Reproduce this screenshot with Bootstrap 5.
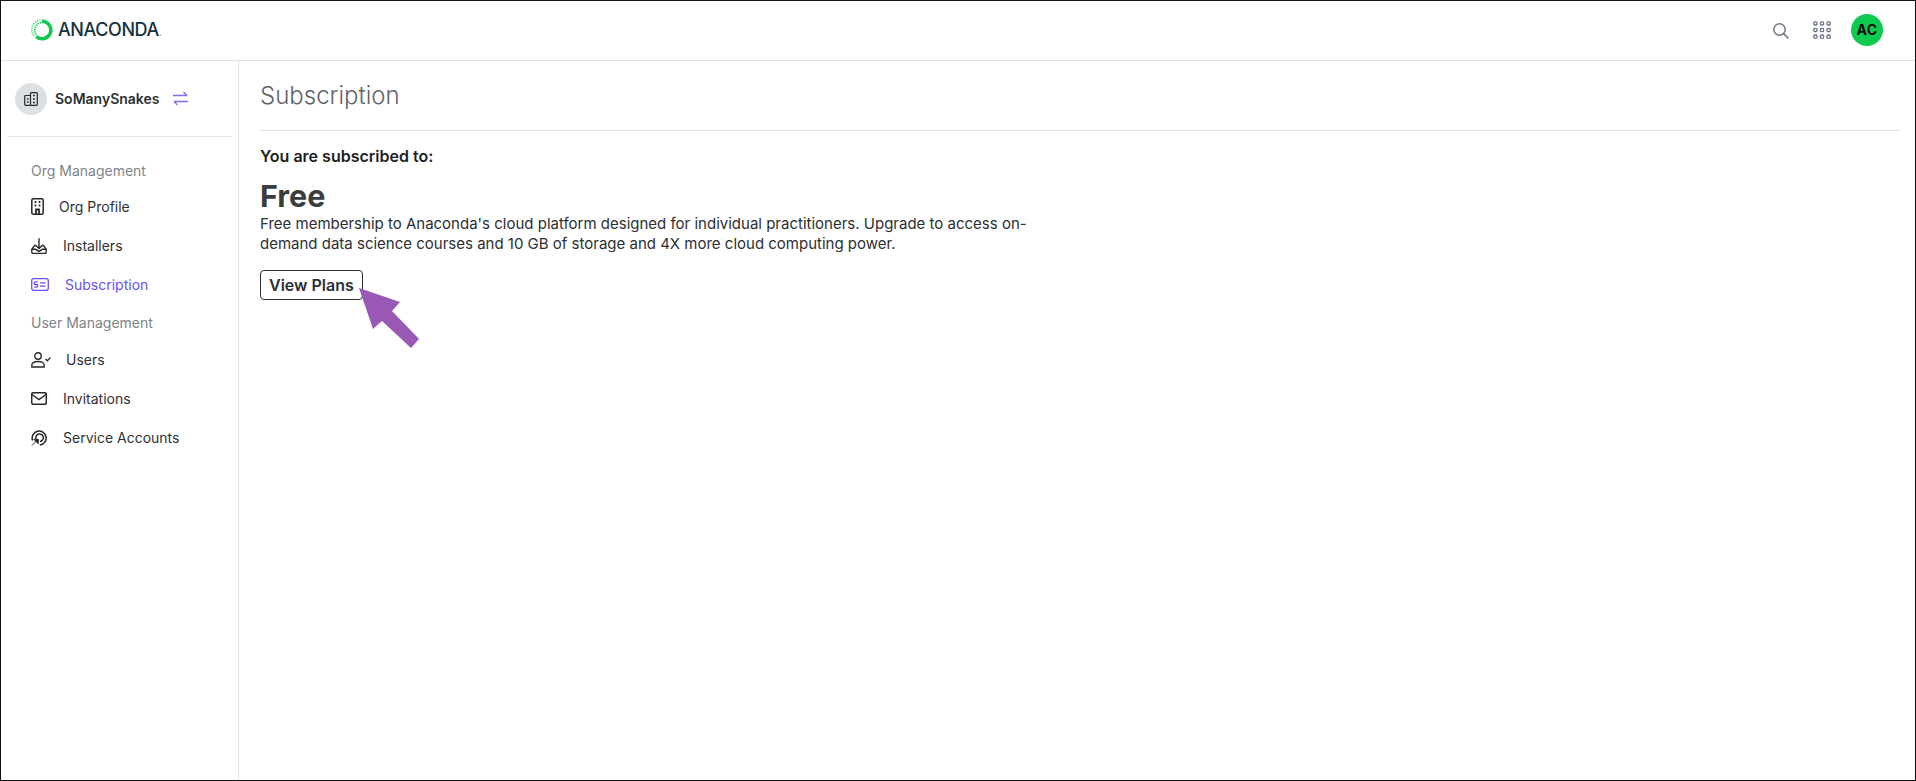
<!doctype html>
<html lang="en">
<head>
<meta charset="utf-8">
<title>Subscription</title>
<link href="https://cdn.jsdelivr.net/npm/bootstrap@5.3.0/dist/css/bootstrap.min.css" rel="stylesheet">
<style>
html,body{height:100%;overflow:hidden}
body{font-family:Inter,"Liberation Sans",sans-serif;color:#2c2f33;background:#fff}
.frame{height:781px;border:1px solid #111;display:flex;flex-direction:column;position:relative}
.topbar{height:60px;flex:none;border-bottom:1px solid #dfe1e5;padding:0 32px 2px 30px}
.brand-name{font-family:Inter,sans-serif;font-size:18px;font-weight:500;letter-spacing:-.42px;color:#14303c;line-height:1}
.brand-name small{font-size:10px;color:#8a9aa2}
.initials{width:32px;height:32px;border-radius:50%;background:#0ecb4f;color:#0b0b0b;font-size:14px;font-weight:700;letter-spacing:.5px}
.sidebar{width:238px;flex:none;border-right:1px solid #dfe1e5;padding:0 6px}
.orgline{height:76px;border-bottom:1px solid #e4e6e9;padding:0 8px}
.orgicon{width:32px;height:32px;border-radius:50%;background:#dcdfe4}
.orgname{font-size:14px;font-weight:600;color:#2d3034;margin:0 13px 0 8px;line-height:32px}
.navhead{font-size:14px;color:#7f8387;height:38px;padding:0 0 2px 24px;display:flex;align-items:center}
.navhead.first{margin-top:14px;padding-bottom:0}
.navrow{height:39px;padding-left:24px;color:#2f3235;font-size:14px;text-decoration:none;display:flex;align-items:center}
.navrow.active{color:#6a50f5}
.navrow svg{flex:none}
.navhead + .navrow{margin-top:-2px}
.main-pane{padding:0 16px 0 21px}
.page-title{font-size:24px;font-weight:300;color:#5f6368;height:70px;line-height:70px;border-bottom:1px solid #dcdee1;margin:0}
.sub-label{font-size:16px;font-weight:600;color:#1d1f22;margin:13px 0 0;line-height:24px}
.plan-name{font-size:30.5px;font-weight:700;color:#3a3c3e;line-height:38px;margin:9px 0 0}
.plan-text{font-size:15px;line-height:19.5px;color:#2c2f33;width:785px;margin:-1px 0 0}
.plans-btn{--bs-btn-padding-x:8px;--bs-btn-padding-y:0;--bs-btn-font-size:16px;--bs-btn-font-weight:600;--bs-btn-border-radius:4px;--bs-btn-border-color:#2c2f33;--bs-btn-color:#2c2f33;--bs-btn-line-height:28px;margin-top:17px}
.callout{position:absolute;left:0;top:0;pointer-events:none}
.gap-a{margin-right:15px}.gap-b{margin-right:16px}.gap-c{margin-right:16px}
.topsearch{margin:3px 24px 0 0}.topdots{margin-right:20px}
.logoring{margin-right:5px}
</style>
</head>
<body>
<div class="frame">
  <header class="topbar d-flex align-items-center">
    <svg class="logoring" width="22" height="22" viewBox="0 0 22 22" fill="none"><path d="M11 2.200A8.800 8.800 0 1 1 5.200 17.600" stroke="#0ecb4f" stroke-width="3.500"/><path d="M9.500 .9A10 10 0 0 0 2.900 17" stroke="#45d97a" stroke-width="1.400" stroke-dasharray="1.400 1"/><path d="M10.500 3.700A7.400 7.400 0 0 0 5.400 15.800" stroke="#1fce5e" stroke-width="1.600" stroke-dasharray="1.600 .8"/></svg>
    <span class="brand-name">ANACONDA<small>.</small></span>
    <div class="ms-auto d-flex align-items-center">
      <svg class="topsearch" width="16" height="16" viewBox="0 0 16 16" fill="none" stroke="#6f7688" stroke-width="1.500"><circle cx="6.500" cy="6.500" r="5.700"/><path d="M10.600 10.600 15.400 15.400"/></svg>
      <svg class="topdots" width="18" height="18" viewBox="0 0 18 18" fill="none" stroke="#6a7186" stroke-width="1.300"><rect x=".8" y=".8" width="3.200" height="3.200" rx="1"/><rect x="7.400" y=".8" width="3.200" height="3.200" rx="1"/><rect x="14" y=".8" width="3.200" height="3.200" rx="1"/><rect x=".8" y="7.400" width="3.200" height="3.200" rx="1"/><rect x="7.400" y="7.400" width="3.200" height="3.200" rx="1"/><rect x="14" y="7.400" width="3.200" height="3.200" rx="1"/><rect x=".8" y="14" width="3.200" height="3.200" rx="1"/><rect x="7.400" y="14" width="3.200" height="3.200" rx="1"/><rect x="14" y="14" width="3.200" height="3.200" rx="1"/></svg>
      <div class="initials d-flex align-items-center justify-content-center">AC</div>
    </div>
  </header>
  <div class="d-flex flex-grow-1">
    <aside class="sidebar">
      <div class="orgline d-flex align-items-center">
        <div class="orgicon d-flex align-items-center justify-content-center">
          <svg width="14" height="14" viewBox="0 0 14 14" fill="none" stroke="#26292c" stroke-width="1.200"><rect x="6.500" y=".7" width="6.800" height="12.600" rx="1"/><path d="M6.500 3.500H1.700a1 1 0 0 0-1 1v7.800a1 1 0 0 0 1 1h4.800"/><path d="M9 3.500h1.800M9 7h1.800M9 10.500h1.800M3 7h1.500M3 10h1.500" stroke-width="1.700"/></svg>
        </div>
        <span class="orgname">SoManySnakes</span>
        <svg width="15" height="15" viewBox="0 0 15 15" fill="none" stroke="#7d6cf7" stroke-width="1.300"><path d="M0 4.500H14M10.500 1 14 4.500M15 10.500H1M4.500 14 1 10.500"/></svg>
      </div>
      <div class="navhead first">Org Management</div>
      <a class="navrow" href="#"><svg class="gap-a" width="13" height="17" viewBox="0 0 13 17" fill="none" stroke="#26292c" stroke-width="1.500"><rect x=".8" y=".8" width="11.400" height="15.400" rx="1.500"/><path d="M3.600 4h1.700M7.700 4h1.700M3.600 7.500h1.700M7.700 7.500h1.700M5 16v-4.500h3V16" stroke-width="1.800"/></svg>Org Profile</a>
      <a class="navrow" href="#"><svg class="gap-c" width="16" height="16" viewBox="0 0 16 16" fill="none" stroke="#26292c" stroke-width="1.400"><path d="M8 .2v10.300M4.400 7 8 10.500 11.600 7M5.500 7.500H3.500L.8 11.300M10.500 7.500h2l2.700 3.800M.8 11.300h3.700L8 13.400l3.500-2.100h3.700v3a1.100 1.100 0 0 1-1.100 1.100H1.900a1.100 1.100 0 0 1-1.100-1.100z"/></svg>Installers</a>
      <a class="navrow active" href="#"><svg class="gap-b" width="18" height="13" viewBox="0 0 18 13" fill="none" stroke="#6a50f5" stroke-width="1.300"><rect x=".7" y=".7" width="16.600" height="11.600" rx="2"/><path d="M9 4.800h5.500M9 8.200h5.500M6.600 3.800H4.400a1.100 1.100 0 0 0 0 2.700h1a1.100 1.100 0 0 1 0 2.700H3.200"/></svg>Subscription</a>
      <div class="navhead">User Management</div>
      <a class="navrow" href="#"><svg class="gap-a" width="20" height="16" viewBox="0 0 20 16" fill="none" stroke="#26292c" stroke-width="1.400"><circle cx="7" cy="4" r="3.200"/><path d="M.8 15v-1.500c0-2.500 2-4 6.200-4s6.200 1.500 6.200 4V15ZM14.500 7l1.800 1.800L19.500 5.500" stroke-width="1.300"/></svg>Users</a>
      <a class="navrow" href="#"><svg class="gap-c" width="16" height="13" viewBox="0 0 16 13" fill="none" stroke="#26292c" stroke-width="1.500"><rect x=".7" y=".7" width="14.600" height="11.600" rx="1.800"/><path d="M1 2.500 8 7.500 15 2.500"/></svg>Invitations</a>
      <a class="navrow" href="#"><svg class="gap-c" width="16" height="16" viewBox="0 0 16 16" fill="none" stroke="#26292c" stroke-width="1.500"><path d="M1.600 10.500A7 7 0 1 1 8.800 15"/><path d="M5 8.800A3.800 3.800 0 1 1 9 11.500"/><path d="M1 15.500 6.500 10M2.800 9.300h4.500v4.500z" fill="#26292c" stroke-width="1"/></svg>Service Accounts</a>
    </aside>
    <main class="main-pane flex-grow-1">
      <h1 class="page-title">Subscription</h1>
      <p class="sub-label">You are subscribed to:</p>
      <h2 class="plan-name">Free</h2>
      <p class="plan-text">Free membership to Anaconda's cloud platform designed for individual practitioners. Upgrade to access on-demand data science courses and 10 GB of storage and 4X more cloud computing power.</p>
      <button type="button" class="btn plans-btn">View Plans</button>
    </main>
  </div>
  <svg class="callout" width="1914" height="779" viewBox="1 1 1914 779"><polygon points="359,288 400,302 392,311 419,339 411,348 382,321 373,329" fill="#9b59b6"/></svg>
</div>
<script src="https://cdn.jsdelivr.net/npm/bootstrap@5.3.0/dist/js/bootstrap.bundle.min.js"></script>
</body>
</html>
